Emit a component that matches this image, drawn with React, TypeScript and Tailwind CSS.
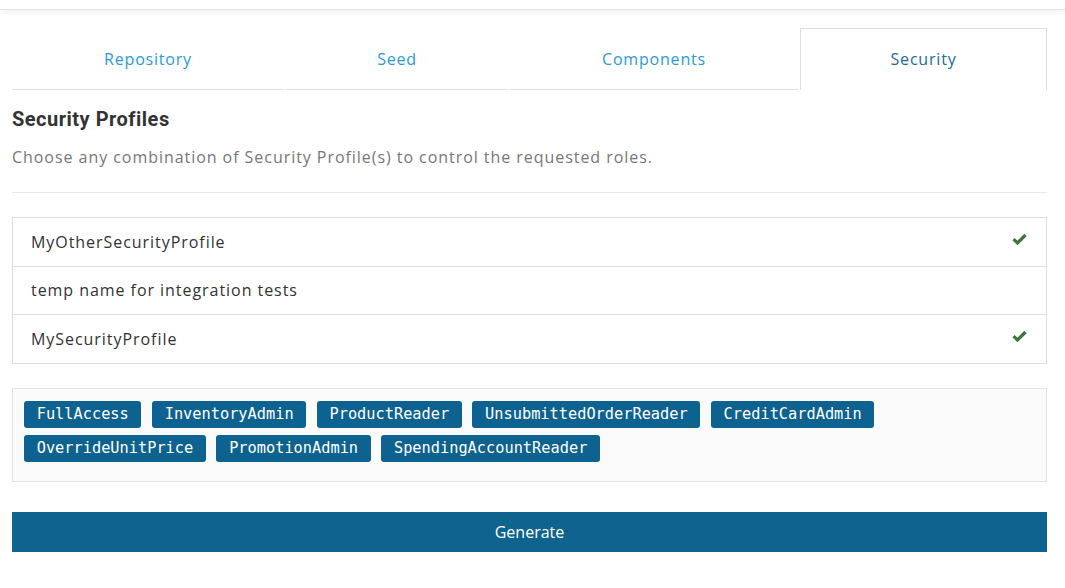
import React from "react";

const tabs = [
  { label: "Repository", w: "w-[272px]" },
  { label: "Seed", w: "w-[222px]" },
  { label: "Components", w: "w-[288px]" },
];

const profiles = [
  { name: "MyOtherSecurityProfile", checked: true },
  { name: "temp name for integration tests", checked: false },
  { name: "MySecurityProfile", checked: true },
];

const roles = [
  "FullAccess",
  "InventoryAdmin",
  "ProductReader",
  "UnsubmittedOrderReader",
  "CreditCardAdmin",
  "OverrideUnitPrice",
  "PromotionAdmin",
  "SpendingAccountReader",
];

function Check() {
  return (
    <svg width="15" height="12" viewBox="0 0 15 12" aria-hidden="true">
      <path d="M1.5 6.2 L5.5 10 L13.5 2" fill="none" stroke="#3c763d" strokeWidth="3.2" strokeLinejoin="miter" />
    </svg>
  );
}

export default function App() {
  return (
    <div className="min-h-[588px] bg-white font-['Open_Sans',sans-serif] text-[#333]">
      <div className="h-[10px] border-b border-[#e3e3e3] shadow-[0_3px_6px_rgba(0,0,0,0.05)]" />
      <div className="pl-[12px] pr-[18px] pt-[18px] w-[1065px]">
        <div className="flex gap-[2px] h-[62px]">
          {tabs.map((t) => (
            <div
              key={t.label}
              className={`${t.w} flex items-center justify-center border-b border-[#ddd] text-[16px] tracking-[0.8px] text-[#2b9ad6]`}
            >
              {t.label}
            </div>
          ))}
          <div className="flex-1 flex items-center justify-center pb-[1px] border border-b-0 border-[#ddd] text-[16px] tracking-[0.8px] text-[#1b6c9a]">
            Security
          </div>
        </div>

        <h2 className="mt-[17px] font-['Roboto',sans-serif] font-bold text-[20px] tracking-[0.5px] leading-[24px] text-[#333]">
          Security Profiles
        </h2>
        <p className="mt-[16px] text-[16px] tracking-[0.95px] leading-[20px] text-[#777]">
          Choose any combination of Security Profile(s) to control the requested roles.
        </p>
        <div className="mt-[25px] border-t border-[#e8e8e8]" />

        <div className="mt-[24px] border border-[#ddd]">
          {profiles.map((p, i) => (
            <div
              key={p.name}
              className={`h-[47.5px] box-content flex items-center justify-between pl-[18px] pr-[19px] text-[16px] tracking-[0.95px] text-[#333] ${
                i > 0 ? "border-t border-[#ddd]" : ""
              }`}
            >
              <span>{p.name}</span>
              {p.checked && (
                <span className="-mt-[6px]">
                  <Check />
                </span>
              )}
            </div>
          ))}
        </div>

        <div className="mt-[24px] border border-[#e3e3e3] bg-[#fafafa] pt-[12px] pl-[11px] pr-[11px] pb-[12px] flex flex-wrap">
          {roles.map((r) => (
            <span
              key={r}
              className="mr-[10.5px] mb-[7px] h-[27px] flex items-center px-[12.7px] rounded-[3px] bg-[#0e628f] text-white font-['DejaVu_Sans_Mono',monospace] text-[15.3px]"
            >
              {r}
            </span>
          ))}
        </div>

        <button className="mt-[30px] w-full h-[40px] bg-[#0e638f] text-white text-[16px] flex items-center justify-center">
          Generate
        </button>
      </div>
    </div>
  );
}
